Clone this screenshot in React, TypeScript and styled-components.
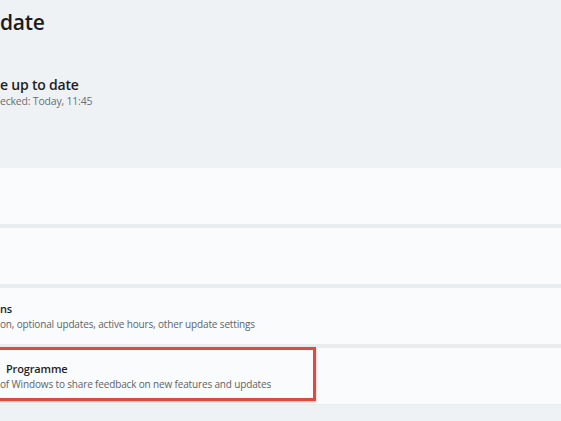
import React from "react";
import styled, { createGlobalStyle } from "styled-components";

const Global = createGlobalStyle`
  html, body { margin: 0; padding: 0; }
  body {
    background: #eff2f5;
    font-family: "Open Sans", "Noto Sans", "Liberation Sans", sans-serif;
    overflow: hidden;
    width: 561px;
    height: 421px;
  }
`;

const Page = styled.div`
  display: flex;
  flex-direction: column;
  width: 561px;
  height: 421px;
  background: #eff2f5;
`;

const Header = styled.header`
  display: flex;
  flex-direction: column;
  padding-top: 8px;
  height: 160px;
`;

const Title = styled.h1`
  margin: 0;
  font-size: 21px;
  line-height: 28px;
  font-weight: 600;
  color: #1c1c1c;
  letter-spacing: -0.3px;
`;

const Status = styled.div`
  display: flex;
  flex-direction: column;
  margin-top: 39px;
  gap: 1px;
`;

const StatusTitle = styled.div`
  font-size: 14px;
  line-height: 19px;
  font-weight: 600;
  color: #1f1f1f;
  letter-spacing: -0.2px;
`;

const StatusSub = styled.div`
  font-size: 10.5px;
  line-height: 13px;
  color: #6a6e72;
  letter-spacing: -0.2px;
`;

const List = styled.div`
  display: flex;
  flex-direction: column;
  gap: 4px;
  background: #eaedf0;
  padding-bottom: 1px;
`;

const Card = styled.div`
  position: relative;
  display: flex;
  flex-direction: column;
  justify-content: center;
  height: 56px;
  background: #f9fbfc;
  box-sizing: border-box;
  gap: 2px;
`;

const CardTitle = styled.div<{ $indent?: number }>`
  font-size: 11px;
  line-height: 14px;
  font-weight: 600;
  color: #1f1f1f;
  padding-left: ${(p) => p.$indent ?? 0}px;
  letter-spacing: -0.15px;
  white-space: nowrap;
`;

const CardSub = styled.div`
  font-size: 10px;
  line-height: 12px;
  color: #5f6367;
  letter-spacing: -0.15px;
  white-space: nowrap;
`;

const Highlight = styled.div`
  position: absolute;
  top: -1px;
  left: -12px;
  width: 328px;
  height: 54px;
  box-sizing: border-box;
  border: 3px solid #dc4b42;
  box-shadow: 0 1px 2px rgba(120, 40, 30, 0.35);
  pointer-events: none;
`;

const Rest = styled.div`
  flex: 1;
  background: #eff2f5;
`;

export default function App() {
  return (
    <>
      <Global />
      <Page>
        <Header>
          <Title>date</Title>
          <Status>
            <StatusTitle>e up to date</StatusTitle>
            <StatusSub>ecked: Today, 11:45</StatusSub>
          </Status>
        </Header>
        <List>
          <Card />
          <Card />
          <Card>
            <CardTitle>ns</CardTitle>
            <CardSub>on, optional updates, active hours, other update settings</CardSub>
          </Card>
          <Card>
            <CardTitle $indent={6}>Programme</CardTitle>
            <CardSub>of Windows to share feedback on new features and updates</CardSub>
            <Highlight />
          </Card>
        </List>
        <Rest />
      </Page>
    </>
  );
}
